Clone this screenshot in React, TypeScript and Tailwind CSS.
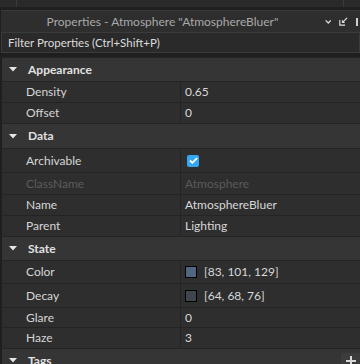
import React from "react";

type Prop = {
  label: string;
  value?: string;
  kind?: "text" | "check" | "color" | "disabled";
  swatch?: string;
  h: string;
};

type Section = { title: string; h: string; rows: Prop[] };

const sections: Section[] = [
  {
    title: "Appearance",
    h: "h-[24px]",
    rows: [
      { label: "Density", value: "0.65", h: "h-[21px]" },
      { label: "Offset", value: "0", h: "h-[21px]" },
    ],
  },
  {
    title: "Data",
    h: "h-[25px]",
    rows: [
      { label: "Archivable", kind: "check", h: "h-[24px]" },
      { label: "ClassName", value: "Atmosphere", kind: "disabled", h: "h-[22px]" },
      { label: "Name", value: "AtmosphereBluer", h: "h-[21px]" },
      { label: "Parent", value: "Lighting", h: "h-[21px]" },
    ],
  },
  {
    title: "State",
    h: "h-[24px]",
    rows: [
      { label: "Color", value: "[83, 101, 129]", kind: "color", swatch: "#536581", h: "h-[23px]" },
      { label: "Decay", value: "[64, 68, 76]", kind: "color", swatch: "#40444c", h: "h-[24px]" },
      { label: "Glare", value: "0", h: "h-[20px]" },
      { label: "Haze", value: "3", h: "h-[21px]" },
    ],
  },
];

function Caret() {
  return (
    <svg width="8" height="5" viewBox="0 0 8 5" className="shrink-0">
      <path d="M0 0H8L4 4.5Z" fill="#e6e6e6" />
    </svg>
  );
}

function Header({ title, h, plus }: { title: string; h: string; plus?: boolean }) {
  return (
    <div className={`${h} flex items-center bg-[#353535] border-b border-[#242424] pl-[7px] shrink-0`}>
      <Caret />
      <span className="ml-[11px] text-[12px] font-bold text-[#e2e2e2]">{title}</span>
      {plus && (
        <span className="ml-auto self-start mt-[4px] w-[19px] h-[20px] bg-[#3c3c3c] flex items-start justify-center pt-[3px]">
          <svg width="10" height="10" viewBox="0 0 10 10">
            <path d="M5 0V10M0 5H10" stroke="#d8d8d8" strokeWidth="2" />
          </svg>
        </span>
      )}
    </div>
  );
}

function Row({ p }: { p: Prop }) {
  const dim = p.kind === "disabled";
  return (
    <div className={`${p.h} flex bg-[#2e2e2e] border-b border-[#242424] shrink-0`}>
      <div
        className={`w-[178px] shrink-0 flex items-center pl-[24px] text-[12px] ${
          dim ? "text-[#5c5c5c]" : "text-[#d6d6d6]"
        }`}
      >
        {p.label}
      </div>
      <div className="flex-1 border-l border-[#242424] flex items-center pl-[4px] text-[12px]">
        {p.kind === "check" && (
          <span className="ml-[2px] w-[12px] h-[12px] rounded-[2px] bg-[#35a7f2] flex items-center justify-center">
            <svg width="9" height="7" viewBox="0 0 9 7">
              <path d="M1 3.5L3.4 5.8L8 1.2" stroke="#fff" strokeWidth="1.8" fill="none" />
            </svg>
          </span>
        )}
        {p.kind === "color" && (
          <span
            className="w-[12px] h-[12px] border border-black mr-[7px] shrink-0"
            style={{ backgroundColor: p.swatch }}
          />
        )}
        {p.value && (
          <span className={dim ? "text-[#5a5a5a]" : "text-[#d8d8d8]"}>{p.value}</span>
        )}
      </div>
    </div>
  );
}

export default function App() {
  return (
    <div className="w-[360px] h-[364px] overflow-hidden bg-[#1f1f1f] flex flex-col font-['Lato',sans-serif]">
      {/* neighbouring panel edge */}
      <div className="h-[8px] flex bg-[#2a2a2a] border-b border-[#202020] shrink-0">
        <div className="w-[17px] border-r border-[#3a3a3a]" />
        <div className="flex-1" />
        <div className="w-[17px] border-l border-[#3a3a3a]" />
      </div>
      <div className="h-[2px] shrink-0" />

      <div className="h-[22px] ml-[1px] flex items-center bg-[#2e2e2e] border-t border-[#3a3a3a] shrink-0">
        <div className="flex-1 text-center text-[12px] text-[#a9a9a9] pl-[2px]">
          Properties - Atmosphere &quot;AtmosphereBluer&quot;
        </div>
        <div className="flex items-center gap-[8px] w-[38px] shrink-0 pl-[3px]">
          <svg width="8" height="6" viewBox="0 0 8 6">
            <path d="M0.8 1L4 4.3L7.2 1" stroke="#d6d6d6" strokeWidth="1.7" fill="none" />
          </svg>
          <svg width="11" height="11" viewBox="0 0 11 11">
            <path d="M1 3.5V10H7.5" stroke="#e0e0e0" strokeWidth="1.4" fill="none" />
            <path d="M10 1L5 6" stroke="#e0e0e0" strokeWidth="1.5" />
            <path d="M3.6 3.4V7.4H7.6Z" fill="#e0e0e0" />
          </svg>
          <span className="w-[4px] h-[8px] border-l-2 border-[#cfcfcf]" />
        </div>
      </div>

      <div className="h-[21px] ml-[1px] flex items-center bg-[#2a2a2a] border border-[#3b3b3b] pl-[6px] text-[11.5px] text-[#dcdcdc] shrink-0">
        Filter Properties (Ctrl+Shift+P)
      </div>
      <div className="h-[4px] shrink-0" />

      <div className="flex flex-col border-l-2 border-t border-[#1f1f1f] border-t-[#242424]">
        {sections.map((s) => (
          <React.Fragment key={s.title}>
            <Header title={s.title} h={s.h} />
            {s.rows.map((r) => (
              <Row key={r.label} p={r} />
            ))}
          </React.Fragment>
        ))}
        <Header title="Tags" h="h-[24px]" plus />
      </div>
    </div>
  );
}
